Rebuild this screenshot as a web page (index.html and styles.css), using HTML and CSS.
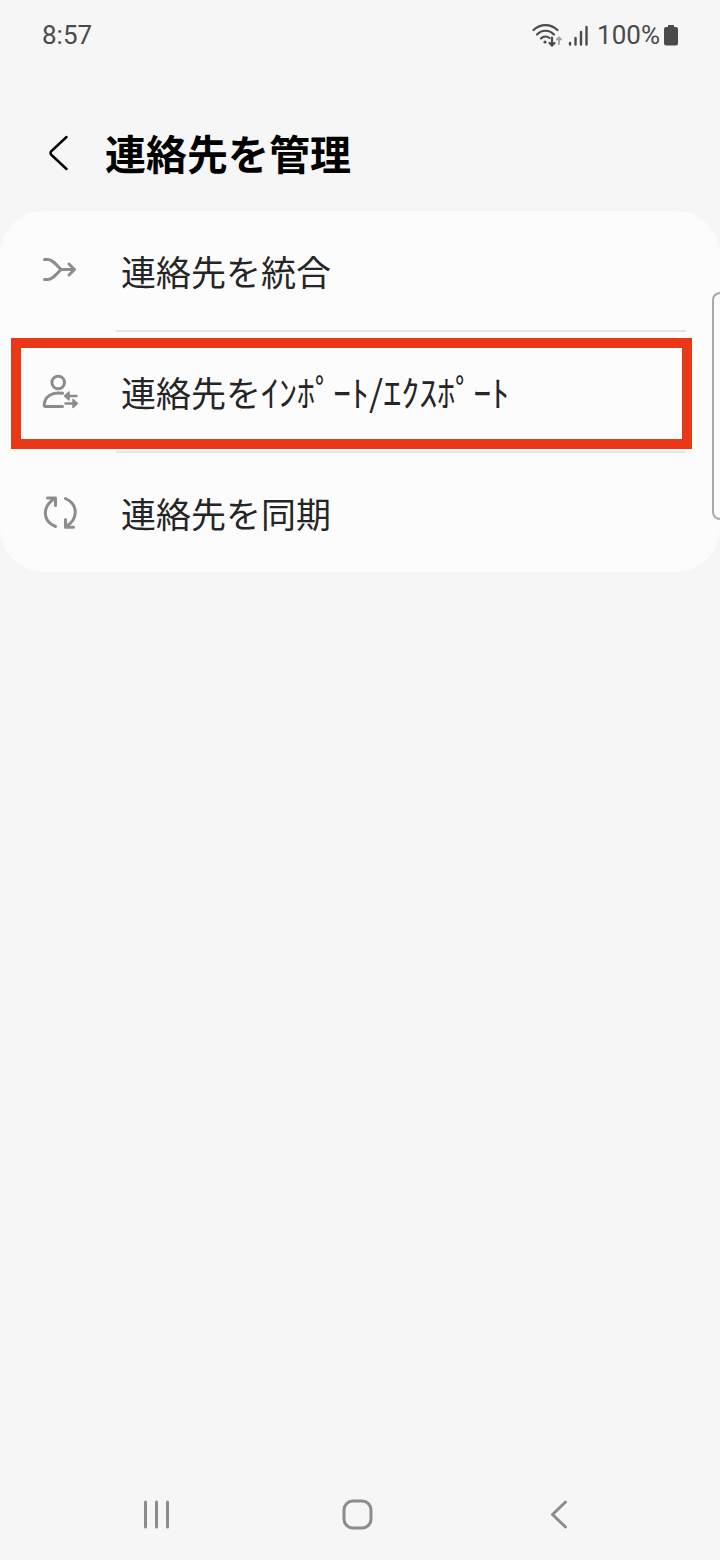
FILE: index.html
```html
<!DOCTYPE html>
<html lang="ja">

<head>
    <meta charset="UTF-8">
    <meta name="viewport" content="width=device-width, initial-scale=1.0">
    <title>連絡先を管理</title>
    <link rel="stylesheet" href="styles.css">
</head>

<body>
    <div class="status-bar">
        <span>8:57</span>
        <div class="status-right">
            <!-- wifi -->
            <svg class="wifi" width="32" height="24" viewBox="0 0 32 24" fill="none" stroke="#4a4a4a" stroke-width="2.2" stroke-linecap="round">
                <path d="M1.5 7C8.5 .5 18.5 .5 25.5 7" />
                <path d="M5 11.5C10 6.5 17 6.5 22 11.5" />
                <path d="M9 15.5C11.5 13 15 13 17.5 15" />
                <circle cx="13" cy="19" r="1.6" fill="#4a4a4a" stroke="none" />
                <path d="M20 14.5V22M17.500 20L20 22.5L22.5 20" />
                <path d="M27 21V14.5M25 16.5L27 14.5L29 16.5" stroke="#a0a0a0" stroke-width="1.8" />
            </svg>
            <!-- signal -->
            <svg class="signal" width="20" height="24" viewBox="0 0 20 24" fill="none" stroke="#4a4a4a" stroke-width="2.4" stroke-linecap="round">
                <path d="M2 20V21.5M7.5 15V21.5M13 9V21.5M18.5 4V21.5" />
            </svg>
            <span>100%</span>
            <svg class="battery" width="14" height="24" viewBox="0 0 14 24" fill="#4a4a4a">
                <path d="M4 2h6v2h2a2 2 0 0 1 2 2V20.5a2 2 0 0 1-2 2H2a2 2 0 0 1-2-2V6a2 2 0 0 1 2-2h2z" />
            </svg>
        </div>
    </div>

    <header class="header">
        <button type="button" class="back" aria-label="戻る">
            <svg width="20" height="36" viewBox="0 0 20 36" fill="none" stroke="#000" stroke-width="2.4" stroke-linecap="round" stroke-linejoin="round">
                <path d="M18.5 2L3 16.5Q2 18 3 19.5L18.5 34" />
            </svg>
        </button>
        <h1>連絡先を管理</h1>
    </header>

    <main>
        <ul class="menu">
            <li>
                <button type="button" class="menu-item">
                    <svg class="icon" viewBox="0 0 41 41">
                        <path d="M4.5 9.5H8C12 9.5 15 13 21 19.5C15 26 12 29.5 8 29.5H4.5M21 19.5H34.5M29 14L34.5 19.5L29 25" />
                    </svg>
                    <span>連絡先を統合</span>
                </button>
            </li>
            <li class="marked">
                <button type="button" class="menu-item">
                    <svg class="icon" viewBox="0 0 41 41">
                        <circle cx="18.2" cy="11.5" r="6.3" />
                        <path d="M22.5 22.2C11 20.5 4.5 26.5 4.2 34Q4.2 35.5 5.8 35.5H22.5" />
                        <path d="M28 25H36.5M25.5 32.5H34" stroke-width="2.5" />
                        <path d="M29 21V29L24.5 25zM33 28.5V36.5L37.5 32.5z" fill="#8c8c8c" stroke-width="1.5" />
                    </svg>
                    <span>連絡先を<span class="kana">ｲﾝﾎﾟｰﾄ/ｴｸｽﾎﾟｰﾄ</span></span>
                </button>
            </li>
            <li>
                <button type="button" class="menu-item">
                    <svg class="icon" viewBox="0 0 41 41">
                        <path d="M15.5 34.5C2 29 2 14 15 6.5M7.5 6H15.5V13.5" />
                        <path d="M25.5 6.5C38.5 12.5 38.5 27.5 25.5 34.5M25.5 27.5V35.2H33.5" />
                    </svg>
                    <span>連絡先を同期</span>
                </button>
            </li>
        </ul>
    </main>

    <div class="edge-handle"></div>

    <nav class="nav-bar">
        <button type="button" aria-label="履歴">
            <svg width="32" height="32" viewBox="0 0 32 32">
                <path d="M4.5 4V29M15.5 4V29M26.5 4V29" />
            </svg>
        </button>
        <button type="button" aria-label="ホーム">
            <svg width="32" height="32" viewBox="0 0 32 32">
                <rect x="2" y="3" width="27" height="27" rx="9" />
            </svg>
        </button>
        <button type="button" aria-label="戻る">
            <svg width="32" height="32" viewBox="0 0 32 32">
                <path d="M22.5 4L9.5 16.5L22.5 29" />
            </svg>
        </button>
    </nav>
</body>

</html>
```
FILE: styles.css
```css
* {
    box-sizing: border-box;
}

body {
    position: relative;
    display: flex;
    flex-direction: column;
    min-height: 100vh;
    margin: 0;
    background-color: #f6f6f6;
    color: #252525;
    font-family: "Noto Sans CJK JP", sans-serif;
    overflow-x: hidden;
}

button {
    padding: 0;
    border: none;
    background: none;
    color: inherit;
    font: inherit;
    text-align: left;
    cursor: pointer;
}

svg {
    display: block;
    flex-shrink: 0;
}

/* Status bar */
.status-bar {
    display: flex;
    justify-content: space-between;
    align-items: center;
    height: 70px;
    padding: 0 42px;
    color: #4a4a4a;
    font-family: Roboto, sans-serif;
    font-size: 26px;
    line-height: 30px;
}

.status-right {
    display: flex;
    align-items: center;
}

.wifi {
    margin-right: 4px;
}

.signal {
    margin-right: 9px;
}

.battery {
    margin-left: 4px;
}

/* Title */
.header {
    display: flex;
    align-items: center;
    gap: 37px;
    height: 141px;
    padding: 24px 48px 0;
}

.header h1 {
    margin: 0;
    padding-bottom: 2px;
    color: #000;
    font-size: 41px;
    line-height: 58px;
    font-weight: 700;
}

/* Menu card */
.menu {
    margin: 0;
    padding: 0;
    list-style: none;
    background-color: #fcfcfc;
    border-radius: 44px;
}

.menu li {
    position: relative;
}

.menu li + li::before {
    content: "";
    display: block;
    height: 2px;
    margin: 0 34px 0 116px;
    background-color: #e4e4e4;
}

.menu-item {
    display: flex;
    align-items: center;
    gap: 40px;
    width: 100%;
    height: 119px;
    padding: 0 40px;
    font-size: 35px;
    line-height: 52px;
}

.kana {
    font-size: 36px;
}

.icon {
    width: 41px;
    height: 41px;
    fill: none;
    stroke: #8c8c8c;
    stroke-width: 3px;
    stroke-linecap: round;
    stroke-linejoin: round;
}

.marked::after {
    content: "";
    position: absolute;
    top: 8px;
    right: 28px;
    bottom: 2px;
    left: 11px;
    border: 10px solid #e93817;
    pointer-events: none;
}

/* Edge panel handle */
.edge-handle {
    position: absolute;
    top: 292px;
    right: 0;
    width: 8px;
    height: 228px;
    border: 2px solid #aaa;
    border-right: none;
    border-radius: 8px 0 0 8px;
}

/* Navigation bar */
.nav-bar {
    display: grid;
    grid-template-columns: repeat(3, 1fr);
    justify-items: center;
    align-items: center;
    height: 92px;
    margin-top: auto;
    padding: 0 60px 0 56px;
}

.nav-bar svg {
    fill: none;
    stroke: #8c8c8c;
    stroke-width: 3px;
    stroke-linecap: round;
    stroke-linejoin: round;
}
```
